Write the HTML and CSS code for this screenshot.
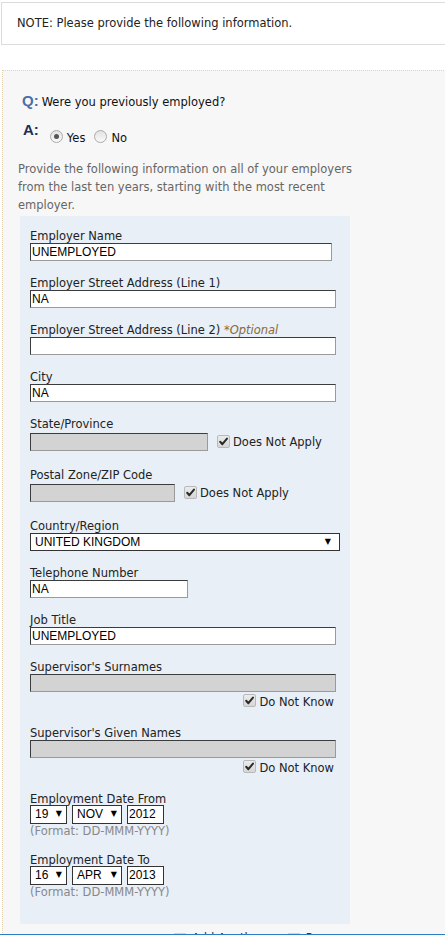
FILE: index.html
```html
<!DOCTYPE html>
<html>
<head>
<meta charset="utf-8">
<link rel="stylesheet" href="styles.css">
</head>
<body>
<div class="page">
  <div class="note">NOTE: Please provide the following information.</div>

  <div class="panel">
    <div class="q-row"><span class="q-mark">Q:</span><span class="q-text">Were you previously employed?</span></div>
    <div class="a-row">
      <span class="a-mark">A:</span>
      <span class="radio checked"></span><span class="radio-label">Yes</span>
      <span class="radio"></span><span class="radio-label">No</span>
    </div>
    <p class="intro">Provide the following information on all of your employers from the last ten years, starting with the most recent employer.</p>

    <div class="box">
      <div class="field">
        <div class="label">Employer Name</div>
        <div class="input w302">UNEMPLOYED</div>
      </div>
      <div class="field">
        <div class="label">Employer Street Address (Line 1)</div>
        <div class="input w306">NA</div>
      </div>
      <div class="field">
        <div class="label">Employer Street Address (Line 2) <span class="optional">*Optional</span></div>
        <div class="input w306"></div>
      </div>
      <div class="field">
        <div class="label">City</div>
        <div class="input w306">NA</div>
      </div>
      <div class="field">
        <div class="label">State/Province</div>
        <div class="inline-row">
          <div class="input disabled w178"></div>
          <span class="check"><svg viewBox="0 0 13 13" width="13" height="13"><path d="M3.2 6.8 L5.4 9.2 L10 3.6" fill="none" stroke="#2a2a2a" stroke-width="2" stroke-linecap="round" stroke-linejoin="round"/></svg></span>
          <span class="check-label">Does Not Apply</span>
        </div>
      </div>
      <div class="field">
        <div class="label">Postal Zone/ZIP Code</div>
        <div class="inline-row">
          <div class="input disabled w145"></div>
          <span class="check"><svg viewBox="0 0 13 13" width="13" height="13"><path d="M3.2 6.8 L5.4 9.2 L10 3.6" fill="none" stroke="#2a2a2a" stroke-width="2" stroke-linecap="round" stroke-linejoin="round"/></svg></span>
          <span class="check-label">Does Not Apply</span>
        </div>
      </div>
      <div class="field">
        <div class="label">Country/Region</div>
        <div class="select w310"><span>UNITED KINGDOM</span><span class="arrow">▼</span></div>
      </div>
      <div class="field">
        <div class="label">Telephone Number</div>
        <div class="input w158">NA</div>
      </div>
      <div class="field">
        <div class="label">Job Title</div>
        <div class="input w306">UNEMPLOYED</div>
      </div>
      <div class="field">
        <div class="label">Supervisor's Surnames</div>
        <div class="input disabled w306"></div>
        <div class="right-check">
          <span class="check"><svg viewBox="0 0 13 13" width="13" height="13"><path d="M3.2 6.8 L5.4 9.2 L10 3.6" fill="none" stroke="#2a2a2a" stroke-width="2" stroke-linecap="round" stroke-linejoin="round"/></svg></span>
          <span class="check-label">Do Not Know</span>
        </div>
      </div>
      <div class="field">
        <div class="label">Supervisor's Given Names</div>
        <div class="input disabled w306"></div>
        <div class="right-check">
          <span class="check"><svg viewBox="0 0 13 13" width="13" height="13"><path d="M3.2 6.8 L5.4 9.2 L10 3.6" fill="none" stroke="#2a2a2a" stroke-width="2" stroke-linecap="round" stroke-linejoin="round"/></svg></span>
          <span class="check-label">Do Not Know</span>
        </div>
      </div>
      <div class="field">
        <div class="label date-label">Employment Date From</div>
        <div class="date-row">
          <div class="dsel day"><span>19</span><span class="arrow">▼</span></div>
          <div class="dsel month"><span>NOV</span><span class="arrow">▼</span></div>
          <div class="dyear">2012</div>
        </div>
        <div class="format">(Format: DD-MMM-YYYY)</div>
      </div>
      <div class="field">
        <div class="label date-label">Employment Date To</div>
        <div class="date-row">
          <div class="dsel day"><span>16</span><span class="arrow">▼</span></div>
          <div class="dsel month"><span>APR</span><span class="arrow">▼</span></div>
          <div class="dyear">2013</div>
        </div>
        <div class="format">(Format: DD-MMM-YYYY)</div>
      </div>
    </div>

    <div class="actions">
      <span class="act"><span class="act-icon">+</span>Add Another</span>
      <span class="act"><span class="act-icon">−</span>Remove</span>
    </div>
  </div>
</div>
<div class="footer"></div>
</body>
</html>
```

FILE: styles.css
```css
html, body {
  margin: 0;
  padding: 0;
}
body {
  width: 445px;
  height: 945px;
  overflow: hidden;
  background: #fff;
  font-family: "DejaVu Sans", Verdana, sans-serif;
  font-size: 11.5px;
  color: #222;
}
.page {
  width: 470px;
  padding-top: 2px;
}
.note {
  margin-left: 1px;
  height: 41px;
  line-height: 41px;
  border: 1px solid #dcdcdc;
  border-right: none;
  padding-left: 15px;
  color: #222;
}
.panel {
  margin-top: 25px;
  margin-left: 2px;
  border-top: 1px dotted #e3d3b0;
  border-left: 1px dotted #e3d3b0;
  background: #f7f7f7;
  padding: 0 0 40px 0;
}
.q-row {
  display: flex;
  align-items: baseline;
  padding: 21px 0 0 19px;
  height: 20px;
}
.q-mark {
  font-family: "Liberation Sans", Arial, sans-serif;
  font-weight: bold;
  font-size: 15px;
  color: #4a6fa8;
  margin-right: 3px;
}
.q-text {
  color: #111;
}
.a-row {
  display: flex;
  align-items: flex-end;
  padding: 10px 0 0 20px;
  height: 23px;
}
.a-mark {
  font-family: "Liberation Sans", Arial, sans-serif;
  font-weight: bold;
  font-size: 15px;
  color: #1d2f52;
  margin-right: 11px;
  align-self: flex-start;
  line-height: 16px;
}
.radio {
  width: 11px;
  height: 11px;
  border: 1px solid #aaa;
  border-radius: 50%;
  background: linear-gradient(#e2e2e2, #fafafa);
  margin-right: 4px;
  margin-bottom: 2px;
  position: relative;
  box-sizing: content-box;
}
.radio.checked::after {
  content: "";
  position: absolute;
  left: 3px;
  top: 3px;
  width: 5px;
  height: 5px;
  border-radius: 50%;
  background: #555;
}
.radio-label {
  margin-right: 9px;
  color: #111;
  line-height: 13px;
}
.intro {
  margin: 15px 0 0 15px;
  width: 345px;
  line-height: 18px;
  color: #666;
}
.box {
  margin: 2px 0 0 17px;
  width: 320px;
  background: #e8eff7;
  padding: 14px 0 25px 10px;
  display: flex;
  flex-direction: column;
  gap: 16px;
}
.field {
  display: flex;
  flex-direction: column;
  align-items: flex-start;
}
.label {
  line-height: 13px;
  color: #222;
}
.date-label {
  margin-bottom: -1px;
}
.optional {
  color: #8a6a3a;
  font-style: italic;
}
.input {
  box-sizing: border-box;
  height: 18px;
  border: 1px solid;
  border-color: #3c3c3c #9a9a9a #9a9a9a #3c3c3c;
  background: #fff;
  font-family: "Liberation Sans", Arial, sans-serif;
  font-size: 12px;
  line-height: 16px;
  padding-left: 1px;
  color: #000;
}
.input.disabled {
  background: #d3d3d3;
}
.w302 { width: 302px; }
.w306 { width: 306px; }
.w310 { width: 310px; }
.w178 { width: 178px; }
.w145 { width: 145px; }
.w158 { width: 158px; }
.inline-row {
  display: flex;
  align-items: center;
  height: 22px;
}
.check {
  display: inline-block;
  width: 13px;
  height: 13px;
  box-sizing: border-box;
  border: 1px solid #b9b9b9;
  border-radius: 2px;
  background: linear-gradient(#ececec, #d6d6d6);
  margin: 0 3px 0 9px;
  position: relative;
  top: -1px;
}
.check svg {
  position: absolute;
  left: -1px;
  top: -1px;
}
.check-label {
  color: #222;
}
.right-check {
  display: flex;
  justify-content: flex-end;
  align-items: center;
  width: 304px;
  height: 19px;
}
.select {
  box-sizing: border-box;
  height: 18px;
  border: 1px solid #333;
  background: #fff;
  font-family: "Liberation Sans", Arial, sans-serif;
  font-size: 12px;
  line-height: 16px;
  padding: 0 8px 0 4px;
  display: flex;
  justify-content: space-between;
  color: #000;
}
.arrow {
  font-family: "DejaVu Sans", sans-serif;
  font-size: 8px;
  line-height: 16px;
}
.date-row {
  display: flex;
  gap: 5px;
}
.dsel {
  box-sizing: border-box;
  height: 19px;
  border: 1px solid #333;
  background: #fff;
  font-family: "Liberation Sans", Arial, sans-serif;
  font-size: 12px;
  line-height: 17px;
  padding: 0 4px;
  display: flex;
  justify-content: space-between;
  color: #000;
}
.dsel.day { width: 37px; }
.dsel.month { width: 50px; }
.dyear {
  box-sizing: border-box;
  width: 37px;
  height: 19px;
  border: 1px solid #333;
  background: #fff;
  font-family: "Liberation Sans", Arial, sans-serif;
  font-size: 12px;
  line-height: 17px;
  padding-left: 1px;
  color: #000;
}
.format {
  color: #888;
  line-height: 13px;
  margin-top: 1px;
}
.actions {
  display: flex;
  gap: 24px;
  padding-left: 171px;
  margin-top: 8px;
  color: #333;
  line-height: 13px;
}
.act {
  display: flex;
  align-items: center;
}
.act-icon {
  display: inline-block;
  width: 12px;
  height: 12px;
  background: #c9d3e3;
  color: #223;
  font-weight: bold;
  text-align: center;
  line-height: 12px;
  margin-right: 6px;
}
.footer {
  position: fixed;
  left: 0;
  right: 0;
  top: 934px;
  bottom: 0;
  background: #fff;
  border-top: 1px solid #2a7cc9;
}
```
